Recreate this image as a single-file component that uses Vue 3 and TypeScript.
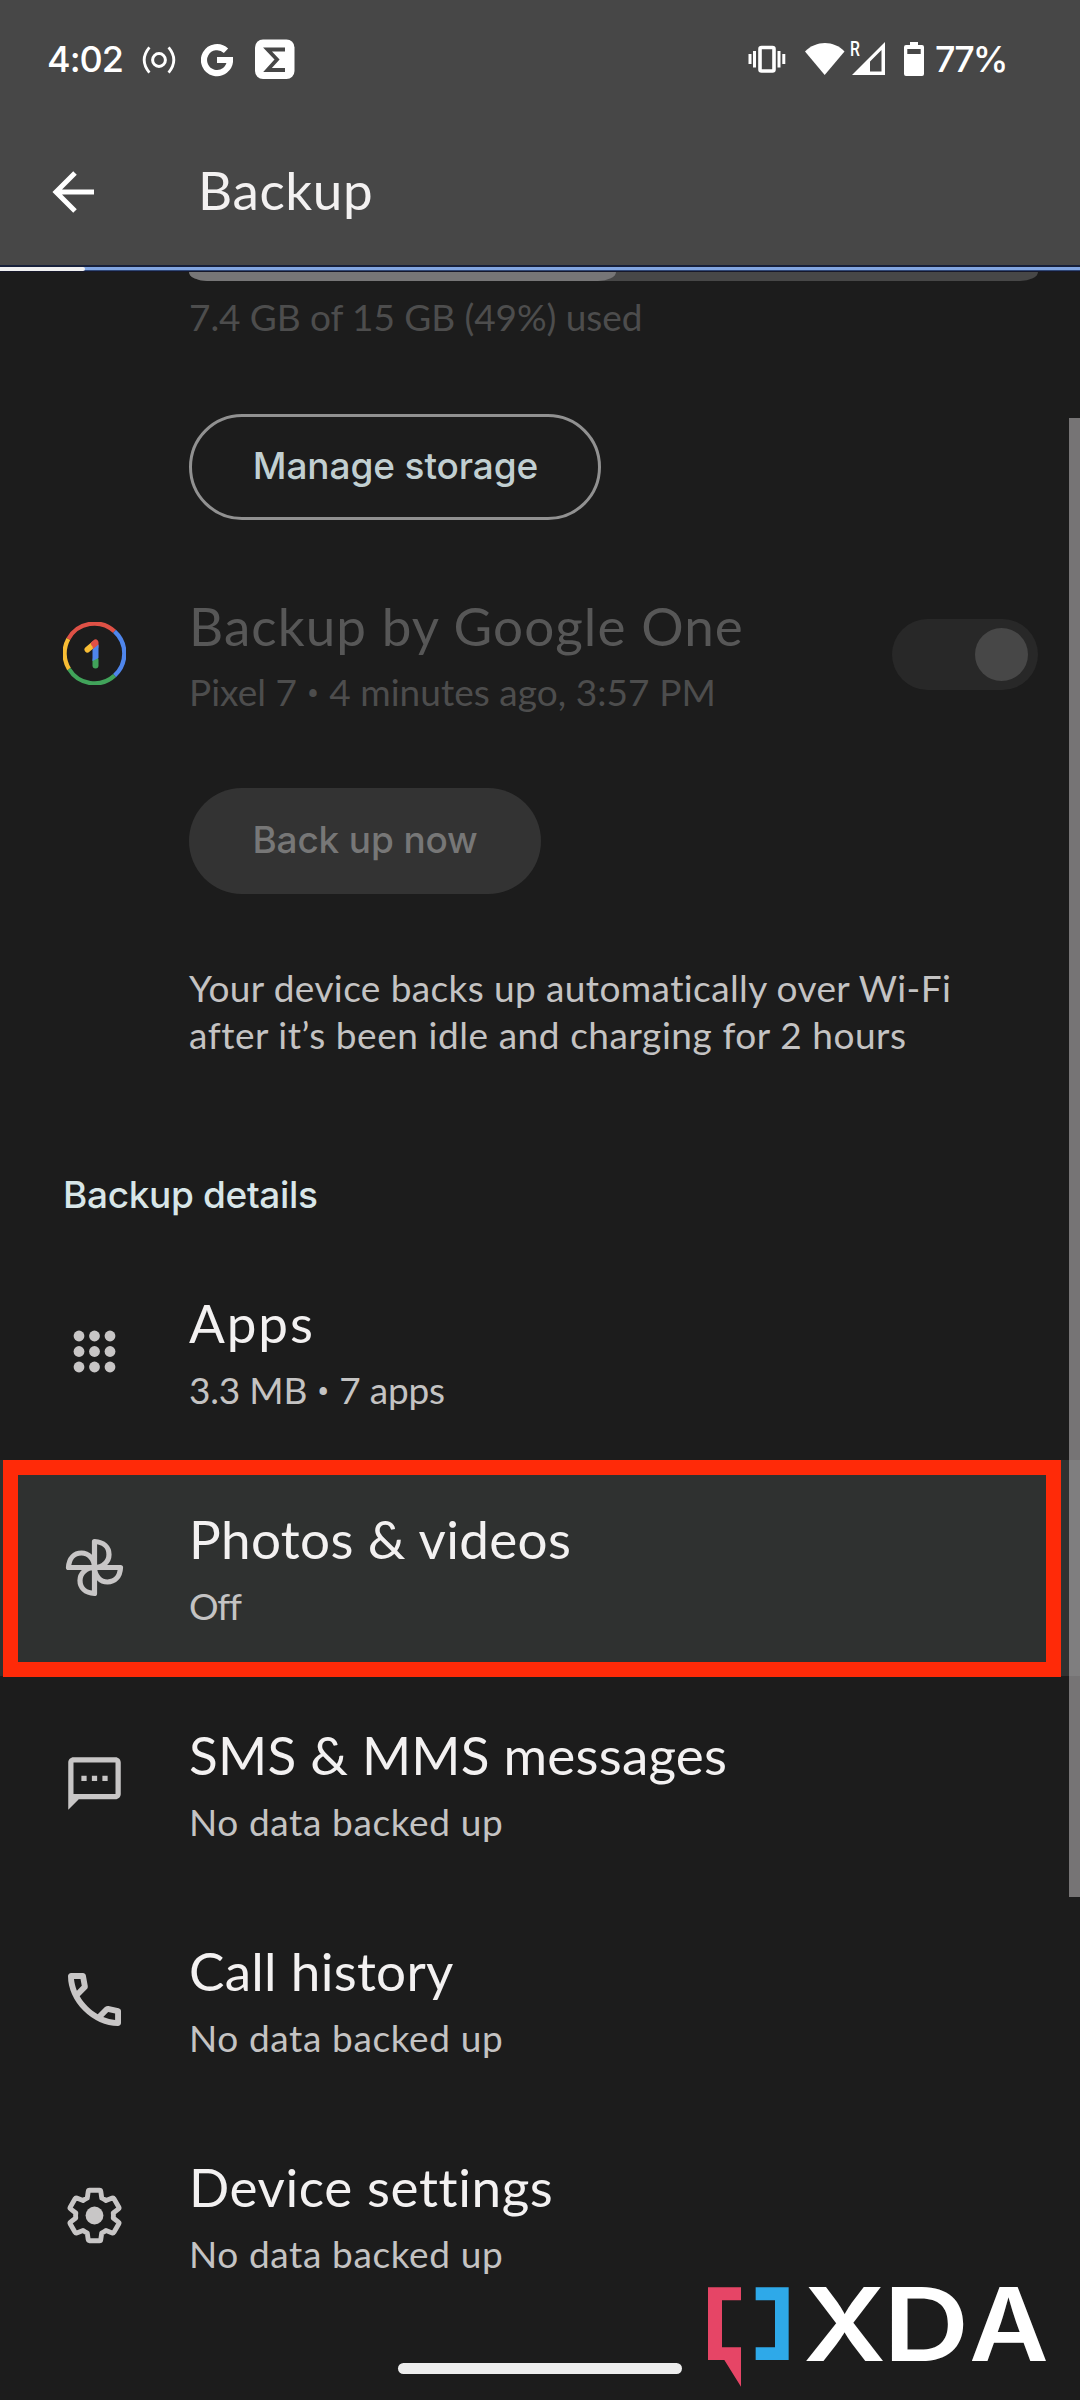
<script setup lang="ts">
interface Detail {
  icon: 'apps' | 'photos' | 'sms' | 'call' | 'settings'
  title: string
  titleSpacing: number
  summary: string[]
  summarySpacing: number
  highlighted?: boolean
}

const details: Detail[] = [
  { icon: 'apps', title: 'Apps', titleSpacing: 1.9, summary: ['3.3 MB', '7 apps'], summarySpacing: -0.2 },
  { icon: 'photos', title: 'Photos & videos', titleSpacing: 0.35, summary: ['Off'], summarySpacing: -1.2, highlighted: true },
  { icon: 'sms', title: 'SMS & MMS messages', titleSpacing: 0.22, summary: ['No data backed up'], summarySpacing: 0.62 },
  { icon: 'call', title: 'Call history', titleSpacing: 0.29, summary: ['No data backed up'], summarySpacing: 0.62 },
  { icon: 'settings', title: 'Device settings', titleSpacing: 0.6, summary: ['No data backed up'], summarySpacing: 0.62 },
]

const dots = [16, 31.5, 47]
const storageUsed = 50.3
</script>

<template>
  <div class="screen">
    <header class="header">
      <div class="status">
        <span class="clock">4:02</span>
        <svg class="hotspot" width="34" height="40" viewBox="0 0 34 40" fill="none" stroke="#fff" stroke-width="3">
          <circle cx="17" cy="21" r="6.4" />
          <path d="M7.4 8.4Q-3 21 7.4 33.6M26.6 8.4Q37 21 26.6 33.6" stroke-width="2.8" />
        </svg>
        <svg class="google" width="32" height="40" viewBox="0 0 32 40" fill="none" stroke="#fff" stroke-width="6.2">
          <path d="M25 11.7A13 13 0 1 0 29 21H16" />
        </svg>
        <svg class="badge" width="40" height="40" viewBox="0 0 40 40">
          <rect y="0.500" width="39.5" height="39.5" rx="8" fill="#fff" />
          <path d="M30 10.500H12.500L22 20.500L12.500 31H30" fill="none" stroke="#474747" stroke-width="3.800" />
        </svg>
        <div class="grow"></div>
        <svg class="vibrate" width="38" height="40" viewBox="0 0 38 40" fill="none" stroke="#fff">
          <rect x="12" y="8.500" width="14" height="23.500" rx="1.500" stroke-width="3.600" />
          <path d="M2 15v10M6.500 12v16.500M31 12v16.500M35.800 15v10" stroke-width="3" />
        </svg>
        <svg class="wifi" width="40" height="40" viewBox="0 0 40 40" fill="#fff">
          <path d="M0 12.500C11 1 29 1 39.500 12.500L19.700 36Z" />
        </svg>
        <span class="roaming">R</span>
        <svg class="signal" width="34" height="40" viewBox="0 0 34 40" fill="#fff">
          <path fill-rule="evenodd" d="M0 36H33V3ZM18 32.500H29.500V11L18 22.500Z" />
        </svg>
        <svg class="battery" width="20" height="40" viewBox="0 0 20 40" fill="#fff">
          <path fill-rule="evenodd" d="M6 3h8v3h4a2 2 0 0 1 2 2v27a2 2 0 0 1-2 2H2a2 2 0 0 1-2-2V8a2 2 0 0 1 2-2h4ZM3.300 10v5h13.400v-5Z" />
        </svg>
        <span class="level">77%</span>
      </div>
      <div class="appbar">
        <svg width="42" height="42" viewBox="0 0 42 42" fill="none" stroke="#fff" stroke-width="5">
          <path d="M42 21H4M23 2L4 21L23 40" />
        </svg>
        <h1>Backup</h1>
      </div>
    </header>

    <div class="loading"><i></i></div>

    <main>
      <section class="storage">
        <div class="track"><div class="used" :style="{ width: storageUsed + '%' }"></div></div>
        <p class="usage">7.4 GB of 15 GB (49%) used</p>
        <button class="btn outlined">Manage storage</button>
      </section>

      <div class="row disabled">
        <svg class="logo" width="63" height="63" viewBox="0 0 63 63" fill="none" stroke-width="4.300">
          <path d="M5.300 17A29.800 29.800 0 0 1 51.500 9.400" stroke="#df5146" />
          <path d="M51.500 9.400A29.800 29.800 0 0 1 51.500 53.600" stroke="#4f86ec" />
          <path d="M51.500 53.600A29.800 29.800 0 0 1 6 47" stroke="#41a35a" />
          <path d="M6 47A29.800 29.800 0 0 1 5.300 17" stroke="#f8bd34" />
          <g stroke-width="6" stroke-linecap="round">
            <path d="M32.500 38v5.500" stroke="#41a35a" />
            <path d="M24.500 27.500l6-5" stroke="#f8bd34" />
            <path d="M31 21.800l1.500-1.300v4" stroke="#df5146" stroke-linejoin="round" />
          </g>
          <path d="M29.500 27.500l6-5v13.500l-6 3Z" fill="#4f86ec" />
        </svg>
        <div class="labels">
          <div class="title one">Backup by Google One</div>
          <div class="summary pixel"><span>Pixel 7</span><i class="bullet">•</i><span>4 minutes ago, 3:57 PM</span></div>
        </div>
        <div class="switch"><i></i></div>
      </div>

      <button class="btn filled">Back up now</button>

      <p class="note">
        <span class="l1">Your device backs up automatically over Wi-Fi</span><br />
        <span class="l2">after it’s been idle and charging for 2 hours</span>
      </p>

      <h2>Backup details</h2>

      <div v-for="d in details" :key="d.title" class="row" :class="{ active: d.highlighted }">
        <svg v-if="d.icon === 'apps'" class="icon" width="63" height="63" viewBox="0 0 63 63">
          <template v-for="y in dots" :key="y">
            <circle v-for="x in dots" :key="x" :cx="x" :cy="y" r="5.400" />
          </template>
        </svg>
        <svg v-else-if="d.icon === 'photos'" class="icon outline" width="63" height="63" viewBox="0 0 63 63">
          <path
            v-for="a in [0, 90, 180, 270]"
            :key="a"
            :transform="`rotate(${a} 31.5 31.5)`"
            d="M31.500 31.500V5.500C41 6 46 11.500 46 18.500S40 31.500 31.500 31.500Z"
          />
        </svg>
        <svg v-else-if="d.icon === 'sms'" class="icon" width="63" height="63" viewBox="0 0 24 24">
          <path d="M20 2H4c-1.100 0-2 .9-2 2v18l4-4h14c1.100 0 2-.9 2-2V4c0-1.100-.9-2-2-2zm0 14H4V4h16v12zM7 9h2v2H7zm4 0h2v2h-2zm4 0h2v2h-2z" />
        </svg>
        <svg v-else-if="d.icon === 'call'" class="icon" width="63" height="63" viewBox="52 -908 856 856">
          <path
            d="M798-120q-125 0-247-54.500T329-329Q229-429 174.500-551T120-798q0-18 12-30t30-12h162q14 0 25 9.500t13 22.500l26 140q2 16-1 27t-11 19l-97 98q20 37 47.500 71.500T387-386q31 31 65 57.500t72 48.500l94-94q9-9 23.500-13.500T670-390l138 28q14 4 23 14.500t9 23.500v162q0 18-12 30t-30 12ZM241-600l66-66-17-94h-89q5 41 14 81t26 79Zm358 358q39 17 79.500 27t81.500 13v-88l-94-19-67 67Z"
          />
        </svg>
        <svg v-else class="icon" width="63" height="63" viewBox="0 0 24 24">
          <path
            class="gear"
            d="M19.140 12.940c.04-.3.06-.61.06-.94 0-.32-.02-.64-.07-.94l2.030-1.580c.18-.14.23-.41.12-.61l-1.920-3.320c-.12-.22-.37-.29-.59-.22l-2.390.96c-.5-.38-1.030-.7-1.620-.94l-.36-2.540c-.04-.24-.24-.41-.48-.41h-3.840c-.24 0-.43.17-.47.41l-.36 2.540c-.59.24-1.130.57-1.620.94l-2.390-.96c-.22-.08-.47 0-.59.22L2.740 8.870c-.12.21-.08.47.12.61l2.030 1.580c-.05.3-.09.63-.09.94s.02.64.07.94l-2.030 1.580c-.18.14-.23.41-.12.61l1.920 3.320c.12.22.37.29.59.22l2.390-.96c.5.38 1.030.7 1.620.94l.36 2.540c.05.24.24.41.48.41h3.840c.24 0 .44-.17.47-.41l.36-2.540c.59-.24 1.130-.56 1.620-.94l2.390.96c.22.08.47 0 .59-.22l1.920-3.320c.12-.22.07-.47-.12-.61z"
          />
          <circle cx="12" cy="12" r="3.400" />
        </svg>
        <div class="labels">
          <div class="title" :style="{ letterSpacing: d.titleSpacing + 'px' }">{{ d.title }}</div>
          <div class="summary" :style="{ letterSpacing: d.summarySpacing + 'px' }">
            <template v-for="(s, i) in d.summary" :key="s"><i v-if="i" class="bullet">•</i><span>{{ s }}</span></template>
          </div>
        </div>
      </div>
    </main>

    <div class="frame"></div>
    <div class="scrollbar"></div>
    <div class="homebar"></div>
    <svg class="xda" width="420" height="160" viewBox="0 0 1260 480">
      <path d="M144 142H243V181H186V322H243V440L193 360H144Z" fill="#e64566" />
      <path d="M287 142H386V360H287V322H345V181H287Z" fill="#2ea9e9" />
      <g fill="#fff" font-family="Inter, sans-serif" font-weight="600" font-size="305">
        <text x="430" y="363" textLength="248" lengthAdjust="spacingAndGlyphs">X</text>
        <text x="670" y="363" textLength="258" lengthAdjust="spacingAndGlyphs">D</text>
        <text x="928" y="363" textLength="238" lengthAdjust="spacingAndGlyphs">A</text>
      </g>
    </svg>
  </div>
</template>

<style>
body {
  background: #1c1c1c;
}
</style>

<style scoped>
.screen {
  position: relative;
  width: 1080px;
  height: 2400px;
  overflow: hidden;
  background: #1c1c1c;
  color: #f3f1f1;
  font-family: Lato, 'Noto Sans', sans-serif;
}
h1, h2, p {
  margin: 0;
  font-weight: 400;
}
svg {
  display: block;
  flex: none;
}
.header {
  height: 265px;
  background: #474747;
}
.status {
  height: 118px;
  display: flex;
  align-items: center;
  padding: 0 75px 0 47px;
  font: 500 36px Inter, sans-serif;
  color: #fff;
}
.clock {
  width: 95px;
  letter-spacing: -1px;
}
.google {
  margin-left: 25px;
}
.badge {
  margin-left: 22px;
}
.grow {
  flex: 1;
}
.wifi {
  margin-left: 19px;
}
.roaming {
  width: 7px;
  margin-left: 5px;
  margin-bottom: 20px;
  font: 500 21px Roboto, sans-serif;
  transform: scaleX(0.75);
  transform-origin: left;
}
.signal {
  margin-left: -5px;
}
.battery {
  margin-left: 18px;
}
.level {
  width: 70px;
  margin-left: 11px;
  letter-spacing: -2.1px;
  white-space: nowrap;
}
.appbar {
  height: 147px;
  display: flex;
  align-items: center;
  padding-left: 52px;
}
.appbar h1 {
  margin-left: 104px;
  padding-bottom: 4px;
  font-size: 53px;
  letter-spacing: 0.6px;
}
.loading {
  height: 7px;
  padding-top: 2px;
  box-sizing: border-box;
  background: linear-gradient(#17203a 0 2px, #82a6e2 2px 5px, #2f4674 5px 6px, #17182a 6px);
}
.loading i {
  display: block;
  width: 85px;
  height: 4px;
  border-radius: 0 2px 2px 0;
  background: #f0f0f0;
}
main {
  display: flex;
  flex-direction: column;
  align-items: flex-start;
}
.storage {
  width: 849px;
  margin-left: 189px;
}
.track {
  height: 9px;
  background: #474747;
  border-radius: 0 0 18px 18px / 0 0 9px 9px;
  overflow: hidden;
}
.used {
  height: 9px;
  background: #777677;
  border-radius: 0 0 18px 0 / 0 0 9px 0;
}
.usage {
  margin-top: 12px;
  font-size: 37px;
  line-height: 47px;
  letter-spacing: -0.08px;
  color: #4d4d4d;
}
.btn {
  display: flex;
  align-items: center;
  justify-content: center;
  box-sizing: border-box;
  height: 106px;
  padding: 0 0 3px;
  border: 0;
  border-radius: 53px;
  font: 500 37px Inter, sans-serif;
}
.outlined {
  width: 412px;
  margin-top: 74px;
  padding-left: 1px;
  border: 3px solid #919191;
  background: transparent;
  color: #c1cfd1;
  letter-spacing: -0.1px;
}
.filled {
  width: 352px;
  margin: 26.5px 0 0 189px;
  background: #333;
  color: #777;
  letter-spacing: -0.15px;
}
.row {
  width: 100%;
  height: 216px;
  box-sizing: border-box;
  display: flex;
  align-items: center;
  padding: 0 42px 0 63px;
}
.active {
  background: #2f3130;
}
.disabled {
  margin-top: 25.5px;
}
.icon {
  fill: #c8c6c6;
}
.icon.outline {
  fill: none;
  stroke: #c8c6c6;
  stroke-width: 5.2;
  stroke-linejoin: round;
}
.gear {
  fill: none;
  stroke: #c8c6c6;
  stroke-width: 1.85;
  stroke-linejoin: round;
}
.labels {
  flex: 1;
  margin-left: 63px;
  white-space: nowrap;
}
.title {
  padding-top: 1px;
  font-size: 53px;
  line-height: 64px;
}
.summary {
  display: flex;
  margin-top: 11px;
  font-size: 37px;
  line-height: 47px;
  color: #c4c3c3;
}
.bullet {
  width: 32px;
  padding-top: 3px;
  text-align: center;
  line-height: 44px;
  transform: translateY(1.5px);
  font-family: Roboto, sans-serif;
  font-style: normal;
}
.disabled .title {
  color: #575757;
}
.disabled .summary {
  margin-top: 10px;
  color: #4d4d4d;
}
.one {
  letter-spacing: 1.08px;
}
.pixel {
  letter-spacing: 0.05px;
}
.switch {
  width: 146px;
  height: 71px;
  margin-bottom: -2px;
  box-sizing: border-box;
  padding: 9px 10px;
  display: flex;
  justify-content: flex-end;
  border-radius: 36px;
  background: #282828;
}
.switch i {
  width: 53px;
  height: 53px;
  border-radius: 50%;
  background: #474747;
}
.note {
  margin: 70px 0 0 189px;
  font-size: 37px;
  line-height: 47px;
  color: #c4c3c3;
  white-space: nowrap;
}
.l1 {
  letter-spacing: 0.39px;
}
.l2 {
  letter-spacing: 0.56px;
}
h2 {
  margin: 113px 0 25.5px 63px;
  font: 500 37px/47px Inter, sans-serif;
  letter-spacing: -0.34px;
  color: #d8e6e8;
}
.frame {
  position: absolute;
  left: 3px;
  top: 1460px;
  width: 1058px;
  height: 217px;
  box-sizing: border-box;
  border: 15.5px solid #ff2a08;
}
.scrollbar {
  position: absolute;
  right: 0;
  top: 418px;
  width: 11px;
  height: 1479px;
  background: rgba(208, 204, 205, 0.5);
}
.homebar {
  position: absolute;
  left: 398px;
  top: 2363px;
  width: 284px;
  height: 11px;
  border-radius: 6px;
  background: #ededed;
}
.xda {
  position: absolute;
  right: 0;
  bottom: 0;
}
</style>
